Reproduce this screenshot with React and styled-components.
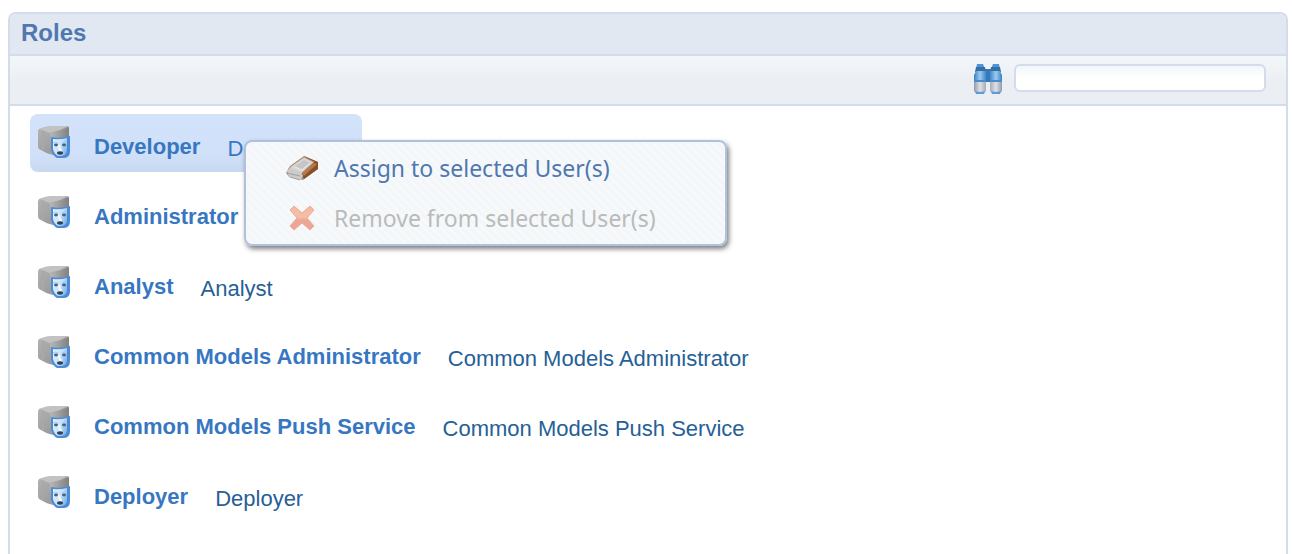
import React from "react";
import styled, { createGlobalStyle } from "styled-components";

const GlobalStyle = createGlobalStyle`
  *, *::before, *::after { box-sizing: border-box; }
  body {
    margin: 0;
    background: #fff;
    font-family: "Liberation Sans", Arial, sans-serif;
  }
`;

const Page = styled.main`
  display: flex;
  flex-direction: column;
  min-height: 100vh;
  padding: 12px 4px 0 8px;
`;

const Panel = styled.section`
  flex: 1;
  border: 2px solid #d3dcec;
  border-bottom: 0;
  border-radius: 8px 8px 0 0;
`;

const PanelHeader = styled.header`
  padding: 5px 11px 7px;
  background: #e1e8f2;
  border-bottom: 2px solid #d3dcec;
  border-radius: 6px 6px 0 0;
`;

const Title = styled.h1`
  margin: 0;
  font-size: 24px;
  line-height: 28px;
  font-weight: 700;
  color: #5077b0;
`;

const Toolbar = styled.div`
  display: flex;
  justify-content: flex-end;
  align-items: flex-start;
  gap: 12px;
  height: 50px;
  padding: 8px 20px 0;
  background: linear-gradient(#f4f7f9, #ebeff4 24px);
  border-bottom: 2px solid #d3dcec;
`;

const SearchLabel = styled.label`
  display: block;
  svg { display: block; }
`;

const SearchInput = styled.input`
  width: 252px;
  height: 28px;
  padding: 0 8px;
  border: 2px solid #d3dcec;
  border-radius: 6px;
  background: linear-gradient(#f4f7f9, #f8fafb 6px, #fff 12px);
  font: inherit;
  font-size: 16px;
  outline: none;
`;

const RoleList = styled.ul`
  display: flex;
  flex-direction: column;
  align-items: flex-start;
  gap: 12px;
  margin: 0;
  padding: 8px 20px 20px;
  list-style: none;
`;

const RoleItem = styled.li`
  position: relative;
  display: flex;
  align-items: flex-start;
  height: 58px;
  padding: 12px 34px 0 8px;
  border-radius: 8px;
  background: ${(p) => (p.$selected ? "linear-gradient(#d3e3fa, #d0e0f9 70%, #c9d8f1)" : "none")};
  white-space: nowrap;
  > svg { flex: none; }
`;

const RoleName = styled.a`
  margin: 8px 27px 0 23px;
  font-size: 22px;
  line-height: 26px;
  font-weight: 700;
  color: #3777c2;
  text-decoration: none;
`;

const RoleDescription = styled.span`
  margin-top: 10px;
  font-size: 22px;
  line-height: 26px;
  color: ${(p) => (p.$selected ? "#3777c2" : "#266095")};
`;

const ContextMenu = styled.div`
  position: absolute;
  z-index: 1;
  top: 26px;
  left: 214px;
  width: 483px;
  padding: 1px 0;
  border: 2px solid #afc1dd;
  border-radius: 8px;
  background: repeating-linear-gradient(45deg, #f4f7f9 0 4px, #f7f9fa 4px 6px);
  box-shadow: 2px 3px 5px rgba(0, 0, 0, 0.5);
`;

const MenuButton = styled.button`
  display: flex;
  align-items: center;
  gap: 16px;
  width: 100%;
  height: 50px;
  padding: 0 40px;
  border: 0;
  background: none;
  font-family: "Noto Sans", "Open Sans", sans-serif;
  font-size: 23px;
  line-height: 32px;
  color: #5077b0;
  text-align: left;
  &:disabled { color: #b9bbbb; }
  svg { flex: none; }
`;

function RoleIcon() {
  return (
    <svg width="33" height="33" viewBox="0 0 33 33" aria-hidden="true">
      <defs>
        <linearGradient id="boxSide" x1="0" x2="1" y1="0" y2="1">
          <stop offset="0" stopColor="#b4b4b4" />
          <stop offset="1" stopColor="#8f8f8f" />
        </linearGradient>
        <linearGradient id="boxFront" x1="0" x2="1">
          <stop offset="0" stopColor="#b8b8b8" />
          <stop offset="1" stopColor="#808080" />
        </linearGradient>
        <linearGradient id="mask" x1="0" x2="1" y1="0" y2="0.5">
          <stop offset="0" stopColor="#e8f4ff" />
          <stop offset="0.6" stopColor="#c6e1fb" />
          <stop offset="1" stopColor="#88b9ec" />
        </linearGradient>
      </defs>
      <path d="M1 3 Q8 0 16 0 H29 Q31 0 31 2 V12 L15 29 Q7 27 1 23 Q0 22 0 20 V5Z" fill="url(#boxSide)" />
      <path d="M1 3 Q8 0 16 0 H30 L22 4 Q15 6 11 7 Q6 4 1 3Z" fill="#c2c2c2" />
      <path d="M12 7 Q22 5 31 1 V12 L14 28Z" fill="url(#boxFront)" />
      <path d="M5 5 V24" stroke="#a8a8a8" strokeWidth="2" />
      <path d="M13 11 Q22 13 32 10 V25 Q32 32 26 32 H19 Q15 30 13 24Z" fill="#4c8cd6" />
      <path d="M15 13 Q22 14 29 12 V23 Q29 29 24 30 H20 Q16 28 15 23Z" fill="url(#mask)" />
      <path d="M15 17 Q17 15 20 17 M24 17 Q27 15 29 17" fill="none" stroke="#a8c9ea" strokeWidth="1" />
      <ellipse cx="18" cy="19" rx="2" ry="1.4" fill="#48627f" />
      <ellipse cx="26" cy="19" rx="2" ry="1.4" fill="#48627f" />
      <path d="M21 19 L22 24 H24" fill="none" stroke="#f3faff" strokeWidth="2" />
      <ellipse cx="22" cy="27" rx="3" ry="1.7" fill="#34414f" />
    </svg>
  );
}

function BinocularsIcon() {
  return (
    <svg width="28" height="31" viewBox="0 0 28 31" aria-hidden="true">
      <defs>
        <linearGradient id="barrel" x1="0" x2="1">
          <stop offset="0" stopColor="#3c80c6" />
          <stop offset="0.5" stopColor="#9acbf2" />
          <stop offset="1" stopColor="#4086cc" />
        </linearGradient>
        <linearGradient id="metal" x1="0" x2="1">
          <stop offset="0" stopColor="#8f9aa8" />
          <stop offset="0.5" stopColor="#dfe1e6" />
          <stop offset="1" stopColor="#a5adb8" />
        </linearGradient>
      </defs>
      <path d="M10 5 H18 V16 L16 18 H12 L10 16Z" fill="#3979b8" />
      <g id="tube">
        <path d="M3 0 H9 L11 5 H2Z" fill="#4f92dc" />
        <path d="M2 3 H11 L12 8 H1Z" fill="#37709f" />
        <path d="M2 7 H12 V18 H0 V11Z" fill="url(#barrel)" />
        <path d="M0 17 H12 V27 L10 29 H2 L0 27Z" fill="url(#metal)" />
        <path d="M0 17 H12" stroke="#4a8cca" strokeWidth="2" />
        <path d="M1 27 Q6 29 11 27 L10 30 H2Z" fill="#5a9bdb" />
      </g>
      <use href="#tube" transform="translate(28 0) scale(-1 1)" />
    </svg>
  );
}

function AssignIcon() {
  return (
    <svg width="32" height="32" viewBox="0 0 32 32" aria-hidden="true">
      <path d="M0 21 L4 14 L18 4 L32 10 V17 L17 28 L13 27 L3 25Z" fill="#9c9a96" />
      <path d="M18 4 L32 10 V17 L18 27 L15 22 L27 11Z" fill="#8a4f25" />
      <path d="M16 21 L28 11 L31 12 L18 24Z" fill="#b57a4c" />
      <path d="M5 14 L18 5 L28 10 L15 22 L2 18Z" fill="#d6d6d5" stroke="#b18b69" strokeWidth="1" />
      <path d="M9 14 L18 8 L24 11 L15 18Z" fill="#c4c6c7" />
      <path d="M9 15 L16 18 L24 11" fill="none" stroke="#ececeb" strokeWidth="1" />
      <path d="M1 19 L4 16 L15 20 L17 24 L14 28 L3 25Z" fill="#cbcbc9" />
      <path d="M1 21 L14 24 M4 25 L14 28" stroke="#a0a09e" strokeWidth="1" />
    </svg>
  );
}

function RemoveIcon() {
  return (
    <svg width="32" height="32" viewBox="0 0 32 32" aria-hidden="true">
      <defs>
        <linearGradient id="cross" x1="0" x2="0" y1="0" y2="1">
          <stop offset="0" stopColor="#f3b8a0" />
          <stop offset="0.45" stopColor="#f2c0a6" />
          <stop offset="0.6" stopColor="#eda596" />
          <stop offset="1" stopColor="#eda596" />
        </linearGradient>
      </defs>
      <path d="M8 4 L16 11 L24 4 L28 8 L21 16 L28 24 L24 28 L16 21 L8 28 L4 24 L11 16 L4 8Z" fill="url(#cross)" stroke="#f0aa9a" strokeWidth="1" strokeLinejoin="round" />
    </svg>
  );
}

const roles = [
  "Developer",
  "Administrator",
  "Analyst",
  "Common Models Administrator",
  "Common Models Push Service",
  "Deployer",
];

function RoleMenu() {
  return (
    <ContextMenu role="menu">
      <MenuButton type="button" role="menuitem">
        <AssignIcon />
        Assign to selected User(s)
      </MenuButton>
      <MenuButton type="button" role="menuitem" disabled>
        <RemoveIcon />
        Remove from selected User(s)
      </MenuButton>
    </ContextMenu>
  );
}

export default function App() {
  const selected = "Developer";
  return (
    <>
      <GlobalStyle />
      <Page>
        <Panel>
          <PanelHeader>
            <Title>Roles</Title>
          </PanelHeader>
          <Toolbar>
            <SearchLabel htmlFor="role-search" aria-label="Search roles">
              <BinocularsIcon />
            </SearchLabel>
            <SearchInput id="role-search" type="text" />
          </Toolbar>
          <RoleList>
            {roles.map((role) => (
              <RoleItem key={role} $selected={role === selected}>
                <RoleIcon />
                <RoleName href="#">{role}</RoleName>
                {role !== "Administrator" && (
                  <RoleDescription $selected={role === selected}>{role}</RoleDescription>
                )}
                {role === selected && <RoleMenu />}
              </RoleItem>
            ))}
          </RoleList>
        </Panel>
      </Page>
    </>
  );
}
